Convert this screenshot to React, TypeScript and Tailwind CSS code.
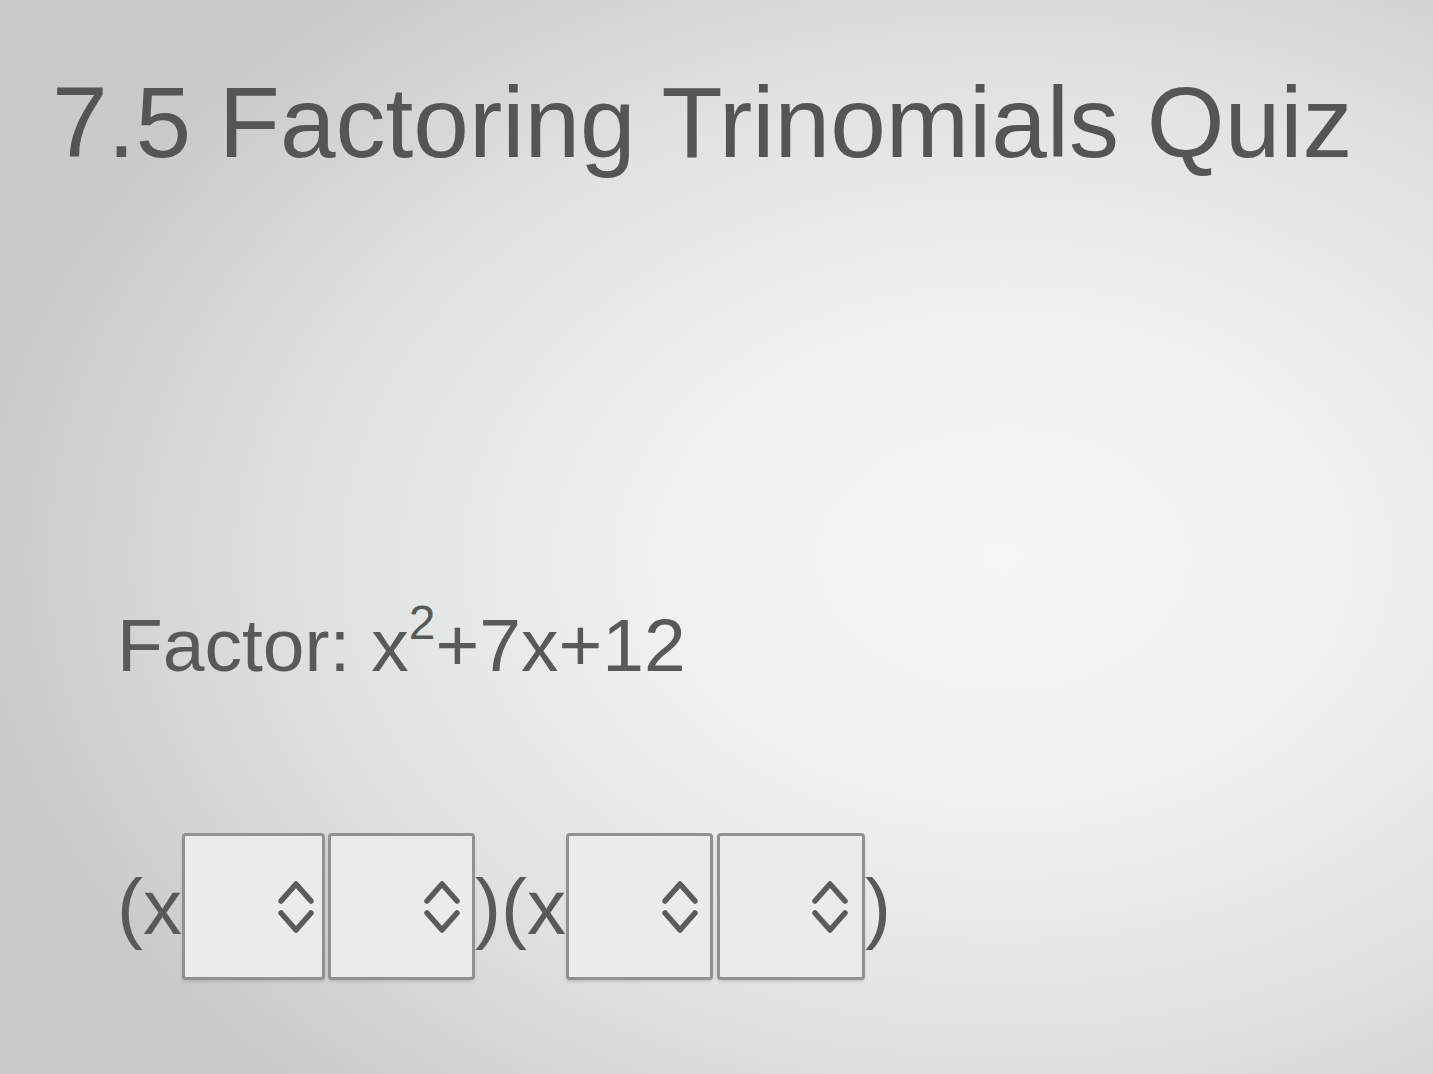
import React from "react";

function Chevrons() {
  return (
    <svg width="40" height="58" viewBox="0 0 40 58" fill="none" stroke="#585c5a" strokeWidth="5.5" strokeLinecap="round" strokeLinejoin="round">
      <path d="M5 23 L20 6 L35 23" />
      <path d="M5 35 L20 52 L35 35" />
    </svg>
  );
}

function Box({ w, pr }: { w: string; pr: string }) {
  return (
    <div className={`${w} ${pr} h-[147px] border-[3px] border-[#8f9290] rounded-[4px] bg-[#e9ecea] shadow-[0_2px_3px_rgba(0,0,0,0.12)] flex items-center justify-end`}>
      <Chevrons />
    </div>
  );
}

export default function App() {
  return (
    <div
      className="w-[1433px] h-[1074px] overflow-hidden bg-[radial-gradient(ellipse_72%_68%_at_70%_52%,#f6f7f5_0%,#eff1ef_35%,#dfe3e1_65%,#c8cbc9_100%)] text-[#505452]"
      style={{ fontFamily: '"Liberation Sans", Arial, sans-serif' }}
    >
      <div className="pt-[72px] pl-[52px]">
        <h1 className="text-[100px] leading-none font-normal whitespace-nowrap text-[#525654]">
          7.5 Factoring Trinomials Quiz
        </h1>
      </div>
      <div className="mt-[436px] pl-[117px] text-[75px] leading-none text-[#565a58] whitespace-nowrap">
        Factor: x<sup className="text-[48px] relative -top-[32px]">2</sup>+7x+12
      </div>
      <div className="mt-[150px] pl-[117px] flex items-center text-[78px] leading-none text-[#565a58]">
        <span>(x</span>
        <div className="flex gap-[3px]">
          <Box w="w-[143px]" pr="pr-[6px]" />
          <Box w="w-[147px]" pr="pr-[10px]" />
        </div>
        <span className="whitespace-nowrap">)(x</span>
        <div className="flex gap-[4px]">
          <Box w="w-[147px]" pr="pr-[10px]" />
          <Box w="w-[148px]" pr="pr-[12px]" />
        </div>
        <span>)</span>
      </div>
    </div>
  );
}
